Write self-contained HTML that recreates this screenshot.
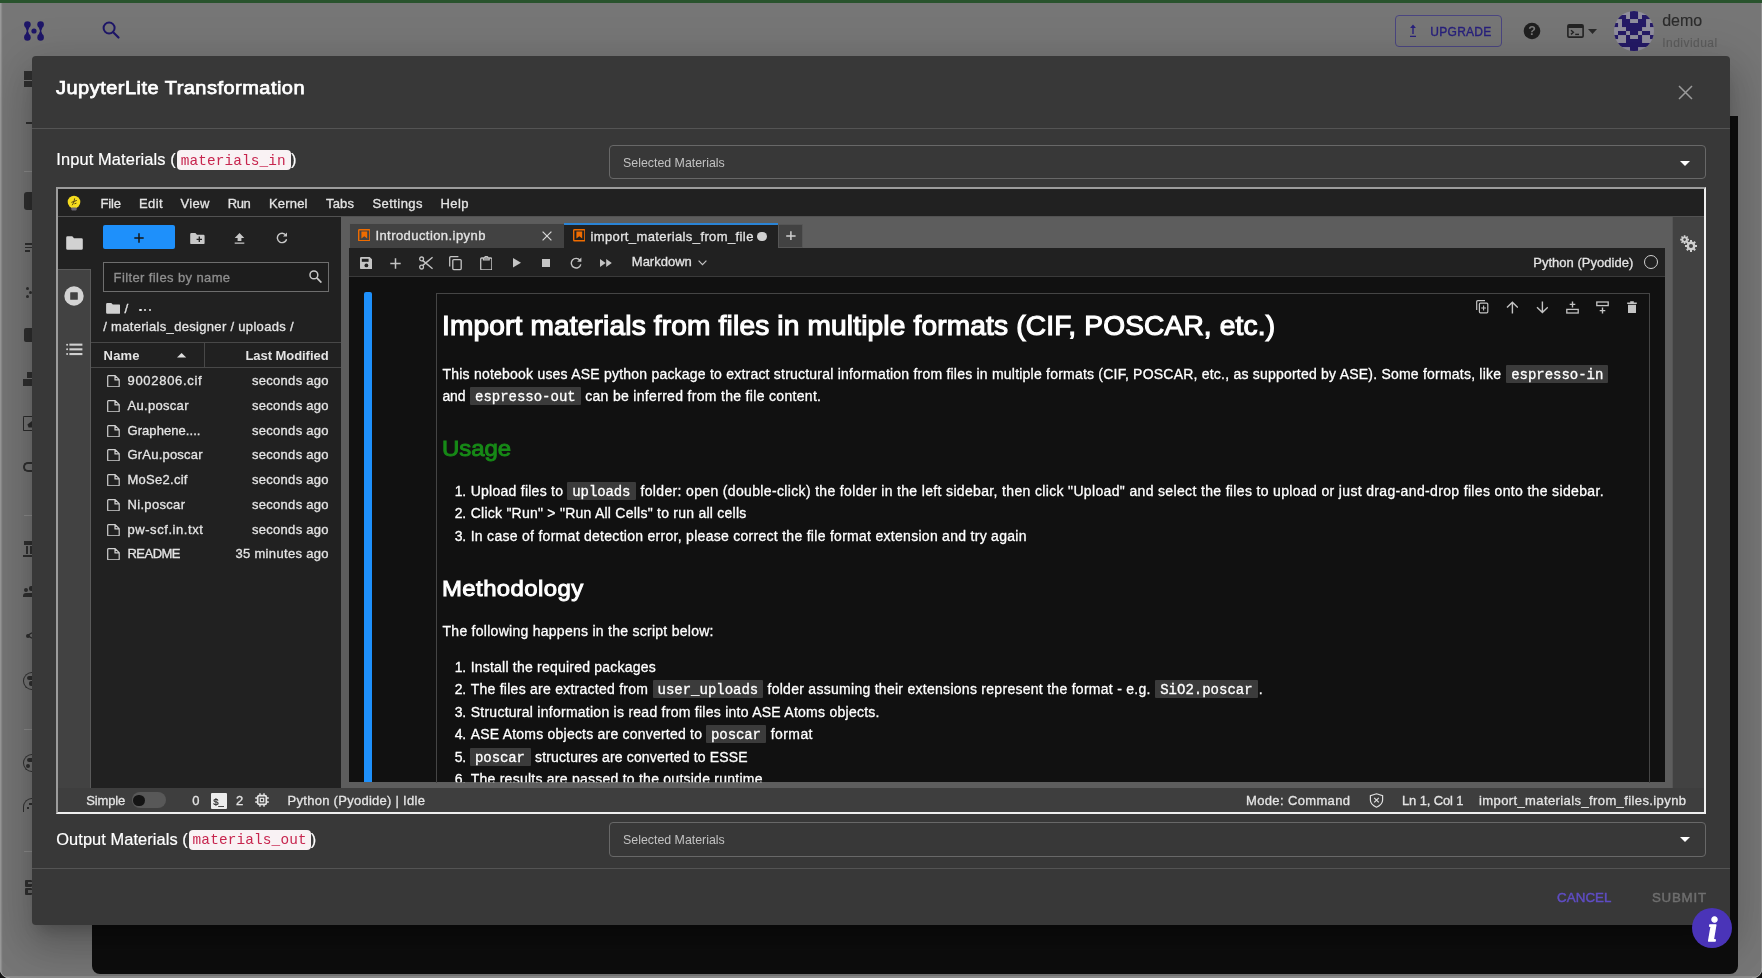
<!DOCTYPE html><html lang="en"><head><meta charset="utf-8"><title>JupyterLite Transformation</title><style>
html,body{margin:0;padding:0}
body{width:1762px;height:978px;overflow:hidden;position:relative;background:#767676;font-family:"Liberation Sans",sans-serif}
.b{position:absolute;box-sizing:border-box;display:block}
.t{position:absolute;white-space:pre;line-height:1;display:block}
#root{position:absolute;left:0;top:0;width:1762px;height:978px;overflow:hidden;will-change:transform}

</style></head><body><div id="root">
<div class="b" style="left:0px;top:0px;width:1762px;height:978px;background:#767676;"></div>
<div class="b" style="left:0px;top:0px;width:3px;height:978px;background:linear-gradient(90deg,#9c9c9c 0,#969696 1px,#7c7c7c 2px,#767676 3px);"></div>
<div class="b" style="left:1760.6px;top:0px;width:1.4px;height:978px;background:#909090;"></div>
<div class="b" style="left:0px;top:0px;width:1762px;height:2.5px;background:#29532d;"></div>
<div class="b" style="left:92px;top:116px;width:1646px;height:858px;background:#0e0e0e;border-radius:0 0 8px 8px;"></div>
<div class="b" style="left:0px;top:975.6px;width:1762px;height:2.4px;background:#8a8a8a;"></div>
<div class="b" style="left:0px;top:968px;width:10px;height:10px;background:radial-gradient(circle at 100% 0,rgba(0,0,0,0) 9.3px,#9a9a9a 9.6px,#9a9a9a 10.3px,#151515 10.8px);"></div>
<div class="b" style="left:1752px;top:968px;width:10px;height:10px;background:radial-gradient(circle at 0 0,rgba(0,0,0,0) 9.3px,#9a9a9a 9.6px,#9a9a9a 10.3px,#151515 10.8px);"></div>
<svg class="b" style="left:24px;top:21px;" width="20" height="20" viewBox="0 0 20 20"><g fill="#1e1668"><circle cx="3.4" cy="3.6" r="3.3"/><circle cx="16.6" cy="3.6" r="3.3"/><circle cx="3.4" cy="16.4" r="3.3"/><circle cx="16.6" cy="16.4" r="3.3"/><circle cx="10" cy="10" r="2.6"/><path d="M1.2 5.5 L5.6 5.5 L4 10 L5.6 14.5 L1.2 14.5 L2.8 10 Z"/><path d="M14.4 5.5 L18.8 5.5 L17.2 10 L18.8 14.5 L14.4 14.5 L16 10 Z"/></g></svg>
<svg class="b" style="left:101.4px;top:20.3px;" width="20" height="20" viewBox="0 0 20 20"><circle cx="8.1" cy="8" r="5.5" fill="none" stroke="#1e1668" stroke-width="2"/><path d="M12.2 12.2 L17.5 17.5" stroke="#1e1668" stroke-width="2.2" stroke-linecap="round"/></svg>
<div class="b" style="left:24.3px;top:71.4px;width:7.7px;height:8.4px;background:#303030;"></div>
<div class="b" style="left:24.3px;top:81.4px;width:7.7px;height:5.2px;background:#303030;"></div>
<div class="b" style="left:26px;top:122px;width:6px;height:1.6px;background:#303030;"></div>
<div class="b" style="left:24px;top:171px;width:8px;height:1px;background:#8c8c8c;"></div>
<div class="b" style="left:24px;top:192px;width:8px;height:18px;background:#303030;border-radius:3px 0 0 3px;"></div>
<div class="b" style="left:25px;top:243px;width:7px;height:1.6px;background:#303030;"></div>
<div class="b" style="left:25px;top:246.5px;width:7px;height:1.6px;background:#303030;"></div>
<div class="b" style="left:25px;top:250px;width:5px;height:1.6px;background:#303030;"></div>
<div class="b" style="left:26px;top:287px;width:3px;height:3px;background:#303030;border-radius:2px;"></div>
<div class="b" style="left:29px;top:291px;width:3px;height:3px;background:#303030;border-radius:2px;"></div>
<div class="b" style="left:26px;top:295px;width:3px;height:3px;background:#303030;border-radius:2px;"></div>
<div class="b" style="left:24px;top:328px;width:8px;height:14px;background:#303030;border-radius:2px 0 0 2px;"></div>
<div class="b" style="left:27px;top:372px;width:5px;height:6px;background:#303030;"></div>
<div class="b" style="left:23px;top:379px;width:9px;height:7px;background:#303030;"></div>
<div class="b" style="left:23.2px;top:416.4px;width:8.8px;height:14.6px;border:1.7px solid #2c2c2c;border-right:none;border-radius:1.5px 0 0 1.5px;"></div>
<svg class="b" style="left:27px;top:421px;" width="5" height="6.5" viewBox="0 0 5 6.5"><path d="M5 0 L0.4 3.6 L1.6 6.5 H5 Z" fill="#2c2c2c"/></svg>
<div class="b" style="left:23px;top:462px;width:9px;height:10px;border:2px solid #303030;border-right:none;border-radius:6px 0 0 6px;"></div>
<div class="b" style="left:24px;top:515px;width:8px;height:1px;background:#8c8c8c;"></div>
<div class="b" style="left:24px;top:541px;width:8px;height:4px;background:#303030;"></div>
<div class="b" style="left:26px;top:546px;width:2px;height:8px;background:#303030;"></div>
<div class="b" style="left:30px;top:546px;width:2px;height:8px;background:#303030;"></div>
<div class="b" style="left:23px;top:555px;width:9px;height:2px;background:#303030;"></div>
<div class="b" style="left:24px;top:588px;width:4px;height:4px;background:#303030;border-radius:2px;"></div>
<div class="b" style="left:23px;top:593px;width:9px;height:4px;background:#303030;border-radius:3px 0 0 0;"></div>
<div class="b" style="left:29px;top:586px;width:3px;height:5px;background:#303030;border-radius:2px 0 0 2px;"></div>
<div class="b" style="left:25.5px;top:633.5px;width:4px;height:4px;background:#303030;border-radius:2px;"></div>
<svg class="b" style="left:27px;top:628px;" width="5" height="14" viewBox="0 0 5 14"><path d="M0.5 7.5 L5 4.8 M0.5 7.5 L5 10.2" stroke="#303030" stroke-width="1.4"/></svg>
<div class="b" style="left:23px;top:672px;width:9px;height:18px;border:1.8px solid #303030;border-right:none;border-radius:9px 0 0 9px;"></div>
<div class="b" style="left:26.5px;top:676px;width:5.5px;height:4px;background:#303030;border-radius:2px 0 0 2px;"></div>
<div class="b" style="left:28.5px;top:681px;width:3.5px;height:5px;background:#303030;border-radius:2px 0 0 2px;"></div>
<div class="b" style="left:24px;top:729px;width:8px;height:1px;background:#8c8c8c;"></div>
<div class="b" style="left:23px;top:753.5px;width:9px;height:18px;border:1.8px solid #303030;border-right:none;border-radius:9px 0 0 9px;"></div>
<div class="b" style="left:27px;top:758px;width:5px;height:3.5px;background:#303030;border-radius:2px 0 0 2px;"></div>
<div class="b" style="left:26px;top:764px;width:4px;height:4px;background:#303030;border-radius:2px;"></div>
<div class="b" style="left:23px;top:798px;width:9px;height:14px;border:1.8px solid #303030;border-right:none;border-bottom:none;border-radius:9px 0 0 0;"></div>
<div class="b" style="left:28.5px;top:803px;width:3.5px;height:2px;background:#303030;"></div>
<div class="b" style="left:27px;top:807px;width:2px;height:2px;background:#303030;"></div>
<div class="b" style="left:24px;top:851px;width:8px;height:1px;background:#8c8c8c;"></div>
<div class="b" style="left:24.5px;top:879.5px;width:7.5px;height:7px;background:#303030;border-radius:1px;"></div>
<div class="b" style="left:24.5px;top:888px;width:7.5px;height:7px;background:#303030;border-radius:1px;"></div>
<div class="b" style="left:27.5px;top:881.8px;width:4.5px;height:2.4px;background:#6a6a6a;"></div>
<div class="b" style="left:27.5px;top:890.3px;width:4.5px;height:2.4px;background:#6a6a6a;"></div>
<div class="b" style="left:1395px;top:15px;width:107px;height:32px;border:1px solid #4a4580;border-radius:4px;"></div>
<svg class="b" style="left:1409px;top:24px;" width="8" height="14" viewBox="0 0 8 14"><path d="M4 0.6 L1.1 4 L3.3 4 L3.3 10 L4.7 10 L4.7 4 L6.9 4 Z M1 11.7 H7 V13 H1 Z" fill="#28207c"/></svg>
<span class="t" style="top:26.00px;font-size:12px;color:#28207c;left:1430.30px;letter-spacing:0.276px;-webkit-text-stroke:0.35px;">UPGRADE</span>
<svg class="b" style="left:1523px;top:22px;" width="18" height="18" viewBox="0 0 18 18"><circle cx="9" cy="9" r="8.3" fill="#1f1f1f"/><text x="9" y="13.3" font-size="12.5" font-weight="700" text-anchor="middle" fill="#7a7a7a" font-family="Liberation Sans, sans-serif">?</text></svg>
<svg class="b" style="left:1567px;top:24px;" width="17" height="14" viewBox="0 0 17 14"><rect x="0.9" y="0.9" width="15.2" height="12.2" rx="1.2" fill="none" stroke="#232323" stroke-width="1.6"/><rect x="1" y="1" width="15" height="3" fill="#232323"/><path d="M4 6.2 L6.4 8.3 L4 10.4" fill="none" stroke="#232323" stroke-width="1.4"/><path d="M8.2 10.4 H12" stroke="#232323" stroke-width="1.4"/></svg>
<svg class="b" style="left:1587.5px;top:28.6px;" width="9" height="5" viewBox="0 0 9 5"><path d="M0 0 H9 L4.5 5 Z" fill="#2a2a2a"/></svg>
<svg class="b" style="left:1614px;top:11px;" width="40" height="40" viewBox="0 0 40 40"><defs><clipPath id="avc"><circle cx="20" cy="20" r="20"/></clipPath></defs><circle cx="20" cy="20" r="20" fill="#908e9d"/><g clip-path="url(#avc)" fill="#251a66"><rect x="16.0" y="0.0" width="4.05" height="4.05"/><rect x="20.0" y="0.0" width="4.05" height="4.05"/><rect x="4.0" y="4.0" width="4.05" height="4.05"/><rect x="8.0" y="4.0" width="4.05" height="4.05"/><rect x="16.0" y="4.0" width="4.05" height="4.05"/><rect x="20.0" y="4.0" width="4.05" height="4.05"/><rect x="28.0" y="4.0" width="4.05" height="4.05"/><rect x="32.0" y="4.0" width="4.05" height="4.05"/><rect x="8.0" y="8.0" width="4.05" height="4.05"/><rect x="12.0" y="8.0" width="4.05" height="4.05"/><rect x="24.0" y="8.0" width="4.05" height="4.05"/><rect x="28.0" y="8.0" width="4.05" height="4.05"/><rect x="0.0" y="12.0" width="4.05" height="4.05"/><rect x="8.0" y="12.0" width="4.05" height="4.05"/><rect x="12.0" y="12.0" width="4.05" height="4.05"/><rect x="16.0" y="12.0" width="4.05" height="4.05"/><rect x="20.0" y="12.0" width="4.05" height="4.05"/><rect x="24.0" y="12.0" width="4.05" height="4.05"/><rect x="28.0" y="12.0" width="4.05" height="4.05"/><rect x="36.0" y="12.0" width="4.05" height="4.05"/><rect x="12.0" y="16.0" width="4.05" height="4.05"/><rect x="16.0" y="16.0" width="4.05" height="4.05"/><rect x="20.0" y="16.0" width="4.05" height="4.05"/><rect x="24.0" y="16.0" width="4.05" height="4.05"/><rect x="4.0" y="20.0" width="4.05" height="4.05"/><rect x="8.0" y="20.0" width="4.05" height="4.05"/><rect x="16.0" y="20.0" width="4.05" height="4.05"/><rect x="20.0" y="20.0" width="4.05" height="4.05"/><rect x="28.0" y="20.0" width="4.05" height="4.05"/><rect x="32.0" y="20.0" width="4.05" height="4.05"/><rect x="0.0" y="24.0" width="4.05" height="4.05"/><rect x="12.0" y="24.0" width="4.05" height="4.05"/><rect x="24.0" y="24.0" width="4.05" height="4.05"/><rect x="36.0" y="24.0" width="4.05" height="4.05"/><rect x="12.0" y="28.0" width="4.05" height="4.05"/><rect x="16.0" y="28.0" width="4.05" height="4.05"/><rect x="20.0" y="28.0" width="4.05" height="4.05"/><rect x="24.0" y="28.0" width="4.05" height="4.05"/><rect x="4.0" y="32.0" width="4.05" height="4.05"/><rect x="8.0" y="32.0" width="4.05" height="4.05"/><rect x="12.0" y="32.0" width="4.05" height="4.05"/><rect x="16.0" y="32.0" width="4.05" height="4.05"/><rect x="20.0" y="32.0" width="4.05" height="4.05"/><rect x="24.0" y="32.0" width="4.05" height="4.05"/><rect x="28.0" y="32.0" width="4.05" height="4.05"/><rect x="32.0" y="32.0" width="4.05" height="4.05"/><rect x="16.0" y="36.0" width="4.05" height="4.05"/><rect x="20.0" y="36.0" width="4.05" height="4.05"/></g></svg>
<span class="t" style="top:13.10px;font-size:16px;color:#2c2c2c;left:1662.20px;letter-spacing:-0.010px;-webkit-text-stroke:0.15px;">demo</span>
<span class="t" style="top:36.80px;font-size:12px;color:#5c5c5c;left:1662.20px;letter-spacing:0.477px;-webkit-text-stroke:0.15px;">Individual</span>
<div class="b" style="left:32px;top:56px;width:1698px;height:869px;background:#383838;border-radius:4px;box-shadow:0 11px 15px -7px rgba(0,0,0,.2),0 24px 38px 3px rgba(0,0,0,.14),0 9px 46px 8px rgba(0,0,0,.12);"></div>
<span class="t" style="top:79.05px;font-size:18.9px;color:#fff;left:56.30px;letter-spacing:0.435px;-webkit-text-stroke:0.75px;transform:scaleX(1.06);transform-origin:0 0;">JupyterLite Transformation</span>
<svg class="b" style="left:1678px;top:84.5px;" width="15" height="15" viewBox="0 0 15 15"><path d="M1 1 L14 14 M14 1 L1 14" stroke="#9a9a9a" stroke-width="1.5" fill="none"/></svg>
<div class="b" style="left:32px;top:128px;width:1698px;height:1px;background:#545454;"></div>
<div class="b" style="left:32px;top:868px;width:1698px;height:1px;background:#545454;"></div>
<span class="t" style="top:150.90px;font-size:16.4px;color:#fff;left:56.30px;letter-spacing:0.124px;-webkit-text-stroke:0.2px;">Input Materials (</span>
<div class="b" style="left:176.7px;top:150px;width:114.7px;height:19.7px;background:#f9f2f4;border-radius:4px;"></div>
<span class="t" style="top:153.60px;font-size:14.4px;color:#c7254e;font-family:'Liberation Mono', 'DejaVu Sans Mono', monospace;left:180.70px;letter-spacing:0.124px;">materials_in</span>
<span class="t" style="top:150.90px;font-size:16.4px;color:#fff;left:291.00px;-webkit-text-stroke:0.2px;">)</span>
<div class="b" style="left:609px;top:145px;width:1097px;height:33.6px;border:1px solid #686868;border-radius:4px;"></div>
<span class="t" style="top:157.00px;font-size:12.4px;color:#c2c2c2;left:623.00px;letter-spacing:-0.008px;">Selected Materials</span>
<svg class="b" style="left:1680px;top:160.5px;" width="10" height="5" viewBox="0 0 10 5"><path d="M0 0 H10 L5 5 Z" fill="#fff"/></svg>
<span class="t" style="top:830.70px;font-size:16.4px;color:#fff;left:56.30px;letter-spacing:0.073px;-webkit-text-stroke:0.2px;">Output Materials (</span>
<div class="b" style="left:188.8px;top:830.2px;width:122.3px;height:19.7px;background:#f9f2f4;border-radius:4px;"></div>
<span class="t" style="top:833.40px;font-size:14.4px;color:#c7254e;font-family:'Liberation Mono', 'DejaVu Sans Mono', monospace;left:192.60px;letter-spacing:0.145px;">materials_out</span>
<span class="t" style="top:830.70px;font-size:16.4px;color:#fff;left:310.80px;-webkit-text-stroke:0.2px;">)</span>
<div class="b" style="left:609px;top:822px;width:1097px;height:35px;border:1px solid #686868;border-radius:4px;"></div>
<span class="t" style="top:834.40px;font-size:12.4px;color:#c2c2c2;left:623.00px;letter-spacing:-0.008px;">Selected Materials</span>
<svg class="b" style="left:1680px;top:837px;" width="10" height="5" viewBox="0 0 10 5"><path d="M0 0 H10 L5 5 Z" fill="#fff"/></svg>
<span class="t" style="top:890.85px;font-size:13.3px;color:#5f4dc4;left:1557.00px;letter-spacing:0.109px;-webkit-text-stroke:0.45px;">CANCEL</span>
<span class="t" style="top:890.85px;font-size:13.3px;color:#6f6f6f;left:1652.00px;letter-spacing:0.753px;-webkit-text-stroke:0.45px;">SUBMIT</span>
<svg class="b" style="left:1692px;top:908px;" width="40" height="40" viewBox="0 0 40 40"><circle cx="20" cy="20" r="20" fill="#4a34b8"/><text x="20.6" y="32.6" font-size="34" font-weight="700" font-style="italic" text-anchor="middle" fill="#fff" stroke="#fff" stroke-width="1.3" stroke-linejoin="round" font-family="Liberation Serif, serif">i</text></svg>
<div class="b" style="left:56px;top:187px;width:1650px;height:627px;background:#5d5d5d;border:2px solid;border-color:#9c9c9c #eeeeee #eeeeee #9c9c9c;"></div>
<div class="b" style="left:58px;top:189px;width:1646px;height:27px;background:#212121;"></div>
<div class="b" style="left:58px;top:216px;width:1646px;height:1px;background:#525252;"></div>
<svg class="b" style="left:66px;top:194px;" width="16" height="18" viewBox="0 0 16 18"><circle cx="8" cy="8" r="6.3" fill="#f5dc1f"/><rect x="5.3" y="13.6" width="5.4" height="2.8" rx="0.8" fill="#6b6670"/><path d="M6.2 11.2 C7.6 9.2 8.3 7 8.6 4.4 M5.4 8.4 L10.8 6.4 M8.4 9.8 L10.4 9.2" stroke="#5a4a12" stroke-width="1" fill="none"/></svg>
<span class="t" style="top:197.10px;font-size:13px;color:#e4e4e4;left:100.50px;letter-spacing:-0.151px;-webkit-text-stroke:0.3px;">File</span>
<span class="t" style="top:197.10px;font-size:13px;color:#e4e4e4;left:139.00px;letter-spacing:0.365px;-webkit-text-stroke:0.3px;">Edit</span>
<span class="t" style="top:197.10px;font-size:13px;color:#e4e4e4;left:180.50px;letter-spacing:0.349px;-webkit-text-stroke:0.3px;">View</span>
<span class="t" style="top:197.10px;font-size:13px;color:#e4e4e4;left:227.70px;letter-spacing:-0.430px;-webkit-text-stroke:0.3px;">Run</span>
<span class="t" style="top:197.10px;font-size:13px;color:#e4e4e4;left:269.00px;letter-spacing:0.184px;-webkit-text-stroke:0.3px;">Kernel</span>
<span class="t" style="top:197.10px;font-size:13px;color:#e4e4e4;left:326.00px;letter-spacing:0.177px;-webkit-text-stroke:0.3px;">Tabs</span>
<span class="t" style="top:197.10px;font-size:13px;color:#e4e4e4;left:372.50px;letter-spacing:0.431px;-webkit-text-stroke:0.3px;">Settings</span>
<span class="t" style="top:197.10px;font-size:13px;color:#e4e4e4;left:440.50px;letter-spacing:0.417px;-webkit-text-stroke:0.3px;">Help</span>
<div class="b" style="left:58px;top:217px;width:33px;height:571px;background:#424242;"></div>
<div class="b" style="left:58px;top:217px;width:34px;height:52px;background:#212121;"></div>
<div class="b" style="left:58px;top:268.6px;width:33px;height:1px;background:#5a5a5a;"></div>
<div class="b" style="left:90px;top:268.6px;width:1px;height:519.4px;background:#5a5a5a;"></div>
<svg class="b" style="left:65.5px;top:236px;" width="17" height="14" viewBox="0 0 17 14"><path d="M1.6 0.3 H6.3 L8 2.2 H15.4 Q16.8 2.2 16.8 3.6 V12.4 Q16.8 13.8 15.4 13.8 H1.6 Q0.2 13.8 0.2 12.4 V1.7 Q0.2 0.3 1.6 0.3 Z" fill="#d2d2d2"/></svg>
<svg class="b" style="left:64px;top:286px;" width="20" height="20" viewBox="0 0 20 20"><circle cx="10" cy="10" r="9.7" fill="#d4d4d4"/><rect x="6.2" y="6.2" width="7.6" height="7.6" rx="0.6" fill="#424242"/></svg>
<svg class="b" style="left:65.5px;top:343px;" width="17" height="13" viewBox="0 0 17 13"><g fill="#d0d0d0"><rect x="3.4" y="0.6" width="13" height="2.1"/><rect x="3.4" y="5.3" width="13" height="2.1"/><rect x="3.4" y="10" width="13" height="2.1"/><circle cx="1.1" cy="1.65" r="1"/><circle cx="1.1" cy="6.35" r="1"/><circle cx="1.1" cy="11.05" r="1"/></g></svg>
<div class="b" style="left:91px;top:217px;width:250px;height:571px;background:#212121;"></div>
<div class="b" style="left:103.2px;top:225.2px;width:71.8px;height:23.8px;background:#1e90fb;border-radius:2px;"></div>
<svg class="b" style="left:134px;top:233px;" width="10" height="10" viewBox="0 0 10 10"><path d="M5 0.3 V9.7 M0.3 5 H9.7" stroke="#161616" stroke-width="1.5"/></svg>
<svg class="b" style="left:190px;top:232.6px;" width="15" height="11.4" viewBox="0 0 15 11.4"><path d="M1.4 0 H5.4 L7 1.7 H13.4 Q14.6 1.7 14.6 2.9 V10 Q14.6 11.2 13.4 11.2 H1.4 Q0.2 11.2 0.2 10 V1.2 Q0.2 0 1.4 0 Z" fill="#c8c8c8"/><path d="M9.3 3.6 V9 M6.6 6.3 H12" stroke="#212121" stroke-width="1.3"/></svg>
<svg class="b" style="left:233.5px;top:232.6px;" width="11" height="11" viewBox="0 0 11 11"><path d="M5.5 0 L10.3 5 H7.4 V8 H3.6 V5 H0.7 Z M0.7 9.4 H10.3 V10.8 H0.7 Z" fill="#c8c8c8"/></svg>
<svg class="b" style="left:275.5px;top:232.4px;" width="11.6" height="11.6" viewBox="0 0 11.6 11.6"><path d="M9.9 3.2 A4.7 4.7 0 1 0 10.6 7.2" fill="none" stroke="#c8c8c8" stroke-width="1.4"/><path d="M11.2 0.4 V4.6 H7 Z" fill="#c8c8c8"/></svg>
<div class="b" style="left:103px;top:262px;width:226.4px;height:29.6px;background:#1d1d1d;border:1px solid #6e6e6e;"></div>
<span class="t" style="top:271.20px;font-size:13px;color:#8f8f8f;left:113.60px;letter-spacing:0.390px;-webkit-text-stroke:0.3px;">Filter files by name</span>
<svg class="b" style="left:308.5px;top:269.6px;" width="13.2" height="13.4" viewBox="0 0 13.2 13.4"><circle cx="4.9" cy="4.9" r="3.9" fill="none" stroke="#c8c8c8" stroke-width="1.5"/><path d="M7.8 7.8 L12.4 12.6" stroke="#c8c8c8" stroke-width="1.7"/></svg>
<svg class="b" style="left:105.8px;top:303.4px;" width="14.6" height="11" viewBox="0 0 14.6 11"><path d="M1.3 0 H5.3 L6.8 1.6 H13.2 Q14.4 1.6 14.4 2.8 V9.6 Q14.4 10.8 13.2 10.8 H1.3 Q0.1 10.8 0.1 9.6 V1.2 Q0.1 0 1.3 0 Z" fill="#d0d0d0"/></svg>
<span class="t" style="top:302.25px;font-size:13.5px;color:#e4e4e4;left:124.60px;-webkit-text-stroke:0.3px;">/</span>
<div class="b" style="left:139.2px;top:308.6px;width:2.6px;height:2.6px;background:#e8e8e8;border-radius:2px;"></div>
<div class="b" style="left:143.9px;top:308.6px;width:2.6px;height:2.6px;background:#e8e8e8;border-radius:2px;"></div>
<div class="b" style="left:148.6px;top:308.6px;width:2.6px;height:2.6px;background:#e8e8e8;border-radius:2px;"></div>
<span class="t" style="top:320.10px;font-size:13px;color:#e4e4e4;left:103.20px;letter-spacing:0.314px;-webkit-text-stroke:0.3px;">/ materials_designer / uploads /</span>
<div class="b" style="left:91px;top:342px;width:250px;height:1px;background:#484848;"></div>
<div class="b" style="left:91px;top:367px;width:250px;height:1px;background:#484848;"></div>
<div class="b" style="left:204px;top:342px;width:1px;height:26px;background:#484848;"></div>
<span class="t" style="top:349.10px;font-size:13px;color:#e4e4e4;font-weight:700;left:103.60px;letter-spacing:0.193px;">Name</span>
<svg class="b" style="left:177.4px;top:353px;" width="9.2" height="4.6" viewBox="0 0 9.2 4.6"><path d="M0 4.6 L4.6 0 L9.2 4.6 Z" fill="#e0e0e0"/></svg>
<span class="t" style="top:349.10px;font-size:13px;color:#e4e4e4;font-weight:700;left:245.40px;letter-spacing:-0.048px;">Last Modified</span>
<svg class="b" style="left:106.6px;top:374.8px;" width="13" height="12.6" viewBox="0 0 13 12.6"><path d="M1.4 0.7 H8.2 L12.2 4.6 V11 Q12.2 11.9 11.3 11.9 H1.4 Q0.7 11.9 0.7 11 V1.5 Q0.7 0.7 1.4 0.7 Z M8 0.9 V4.9 H12" fill="none" stroke="#d0d0d0" stroke-width="1.2" stroke-linejoin="round"/></svg>
<span class="t" style="top:374.00px;font-size:13px;color:#e4e4e4;left:127.50px;letter-spacing:0.697px;-webkit-text-stroke:0.3px;">9002806.cif</span>
<span class="t" style="top:374.00px;font-size:13px;color:#e4e4e4;left:252.00px;letter-spacing:0.287px;-webkit-text-stroke:0.3px;">seconds ago</span>
<svg class="b" style="left:106.6px;top:399.8px;" width="13" height="12.6" viewBox="0 0 13 12.6"><path d="M1.4 0.7 H8.2 L12.2 4.6 V11 Q12.2 11.9 11.3 11.9 H1.4 Q0.7 11.9 0.7 11 V1.5 Q0.7 0.7 1.4 0.7 Z M8 0.9 V4.9 H12" fill="none" stroke="#d0d0d0" stroke-width="1.2" stroke-linejoin="round"/></svg>
<span class="t" style="top:399.00px;font-size:13px;color:#e4e4e4;left:127.50px;letter-spacing:0.307px;-webkit-text-stroke:0.3px;">Au.poscar</span>
<span class="t" style="top:399.00px;font-size:13px;color:#e4e4e4;left:252.00px;letter-spacing:0.287px;-webkit-text-stroke:0.3px;">seconds ago</span>
<svg class="b" style="left:106.6px;top:424.8px;" width="13" height="12.6" viewBox="0 0 13 12.6"><path d="M1.4 0.7 H8.2 L12.2 4.6 V11 Q12.2 11.9 11.3 11.9 H1.4 Q0.7 11.9 0.7 11 V1.5 Q0.7 0.7 1.4 0.7 Z M8 0.9 V4.9 H12" fill="none" stroke="#d0d0d0" stroke-width="1.2" stroke-linejoin="round"/></svg>
<span class="t" style="top:424.00px;font-size:13px;color:#e4e4e4;left:127.50px;letter-spacing:0.065px;-webkit-text-stroke:0.3px;">Graphene....</span>
<span class="t" style="top:424.00px;font-size:13px;color:#e4e4e4;left:252.00px;letter-spacing:0.287px;-webkit-text-stroke:0.3px;">seconds ago</span>
<svg class="b" style="left:106.6px;top:448.8px;" width="13" height="12.6" viewBox="0 0 13 12.6"><path d="M1.4 0.7 H8.2 L12.2 4.6 V11 Q12.2 11.9 11.3 11.9 H1.4 Q0.7 11.9 0.7 11 V1.5 Q0.7 0.7 1.4 0.7 Z M8 0.9 V4.9 H12" fill="none" stroke="#d0d0d0" stroke-width="1.2" stroke-linejoin="round"/></svg>
<span class="t" style="top:448.00px;font-size:13px;color:#e4e4e4;left:127.50px;letter-spacing:0.202px;-webkit-text-stroke:0.3px;">GrAu.poscar</span>
<span class="t" style="top:448.00px;font-size:13px;color:#e4e4e4;left:252.00px;letter-spacing:0.287px;-webkit-text-stroke:0.3px;">seconds ago</span>
<svg class="b" style="left:106.6px;top:473.8px;" width="13" height="12.6" viewBox="0 0 13 12.6"><path d="M1.4 0.7 H8.2 L12.2 4.6 V11 Q12.2 11.9 11.3 11.9 H1.4 Q0.7 11.9 0.7 11 V1.5 Q0.7 0.7 1.4 0.7 Z M8 0.9 V4.9 H12" fill="none" stroke="#d0d0d0" stroke-width="1.2" stroke-linejoin="round"/></svg>
<span class="t" style="top:473.00px;font-size:13px;color:#e4e4e4;left:127.50px;letter-spacing:0.273px;-webkit-text-stroke:0.3px;">MoSe2.cif</span>
<span class="t" style="top:473.00px;font-size:13px;color:#e4e4e4;left:252.00px;letter-spacing:0.287px;-webkit-text-stroke:0.3px;">seconds ago</span>
<svg class="b" style="left:106.6px;top:498.8px;" width="13" height="12.6" viewBox="0 0 13 12.6"><path d="M1.4 0.7 H8.2 L12.2 4.6 V11 Q12.2 11.9 11.3 11.9 H1.4 Q0.7 11.9 0.7 11 V1.5 Q0.7 0.7 1.4 0.7 Z M8 0.9 V4.9 H12" fill="none" stroke="#d0d0d0" stroke-width="1.2" stroke-linejoin="round"/></svg>
<span class="t" style="top:498.00px;font-size:13px;color:#e4e4e4;left:127.50px;letter-spacing:0.322px;-webkit-text-stroke:0.3px;">Ni.poscar</span>
<span class="t" style="top:498.00px;font-size:13px;color:#e4e4e4;left:252.00px;letter-spacing:0.287px;-webkit-text-stroke:0.3px;">seconds ago</span>
<svg class="b" style="left:106.6px;top:523.8px;" width="13" height="12.6" viewBox="0 0 13 12.6"><path d="M1.4 0.7 H8.2 L12.2 4.6 V11 Q12.2 11.9 11.3 11.9 H1.4 Q0.7 11.9 0.7 11 V1.5 Q0.7 0.7 1.4 0.7 Z M8 0.9 V4.9 H12" fill="none" stroke="#d0d0d0" stroke-width="1.2" stroke-linejoin="round"/></svg>
<span class="t" style="top:523.00px;font-size:13px;color:#e4e4e4;left:127.50px;letter-spacing:0.556px;-webkit-text-stroke:0.3px;">pw-scf.in.txt</span>
<span class="t" style="top:523.00px;font-size:13px;color:#e4e4e4;left:252.00px;letter-spacing:0.287px;-webkit-text-stroke:0.3px;">seconds ago</span>
<svg class="b" style="left:106.6px;top:547.8px;" width="13" height="12.6" viewBox="0 0 13 12.6"><path d="M1.4 0.7 H8.2 L12.2 4.6 V11 Q12.2 11.9 11.3 11.9 H1.4 Q0.7 11.9 0.7 11 V1.5 Q0.7 0.7 1.4 0.7 Z M8 0.9 V4.9 H12" fill="none" stroke="#d0d0d0" stroke-width="1.2" stroke-linejoin="round"/></svg>
<span class="t" style="top:547.00px;font-size:13px;color:#e4e4e4;left:127.50px;letter-spacing:-0.525px;-webkit-text-stroke:0.3px;">README</span>
<span class="t" style="top:547.00px;font-size:13px;color:#e4e4e4;left:235.40px;letter-spacing:0.330px;-webkit-text-stroke:0.3px;">35 minutes ago</span>
<div class="b" style="left:349px;top:223.3px;width:215.5px;height:24.7px;background:#424242;border:1px solid #5c5c5c;border-bottom:none;"></div>
<div class="b" style="left:564px;top:222.5px;width:214.3px;height:25.8px;background:#212121;"></div>
<div class="b" style="left:564px;top:222.5px;width:214.3px;height:2.6px;background:#2a84d6;"></div>
<div class="b" style="left:778.3px;top:223.5px;width:24.5px;height:24.2px;background:#424242;border:1px solid #565656;"></div>
<svg class="b" style="left:786.2px;top:230.6px;" width="9.8" height="9.8" viewBox="0 0 9.8 9.8"><path d="M4.9 0.2 V9.6 M0.2 4.9 H9.6" stroke="#d0d0d0" stroke-width="1.5"/></svg>
<svg class="b" style="left:357.8px;top:228.9px;" width="12.6" height="12.4" viewBox="0 0 12.6 12.4"><rect x="0.7" y="0.7" width="11.2" height="11" rx="0.8" fill="none" stroke="#ef6c00" stroke-width="1.4"/><path d="M3.4 2.4 H9.2 V9.4 L6.3 7.2 L3.4 9.4 Z" fill="#ef6c00"/></svg>
<span class="t" style="top:228.90px;font-size:13px;color:#e4e4e4;left:375.40px;letter-spacing:0.434px;-webkit-text-stroke:0.3px;">Introduction.ipynb</span>
<svg class="b" style="left:542px;top:230.6px;" width="10" height="10" viewBox="0 0 10 10"><path d="M0.6 0.6 L9.4 9.4 M9.4 0.6 L0.6 9.4" stroke="#d8d8d8" stroke-width="1.2"/></svg>
<svg class="b" style="left:572.9px;top:229.4px;" width="12.6" height="12.4" viewBox="0 0 12.6 12.4"><rect x="0.7" y="0.7" width="11.2" height="11" rx="0.8" fill="none" stroke="#ef6c00" stroke-width="1.4"/><path d="M3.4 2.4 H9.2 V9.4 L6.3 7.2 L3.4 9.4 Z" fill="#ef6c00"/></svg>
<span class="t" style="top:229.80px;font-size:13px;color:#e4e4e4;left:590.40px;letter-spacing:0.393px;-webkit-text-stroke:0.3px;">import_materials_from_file</span>
<div class="b" style="left:757.4px;top:231.7px;width:9.6px;height:9.6px;background:#d0d0d0;border-radius:5px;"></div>
<div class="b" style="left:349px;top:248px;width:1316px;height:28.4px;background:#212121;"></div>
<div class="b" style="left:349px;top:276.4px;width:1316px;height:1px;background:#3a3a3a;"></div>
<svg class="b" style="left:359.6px;top:257.2px;" width="12.8" height="12.2" viewBox="0 0 12.8 12.2"><path d="M1.2 0 H9.6 L12.8 3 V11 Q12.8 12.2 11.6 12.2 H1.2 Q0 12.2 0 11 V1.2 Q0 0 1.2 0 Z" fill="#c4c4c4"/><rect x="1.8" y="1.8" width="6.8" height="3" fill="#212121"/><circle cx="6.4" cy="8.4" r="1.9" fill="#212121"/></svg>
<svg class="b" style="left:390.4px;top:257.7px;" width="11" height="11" viewBox="0 0 11 11"><path d="M5.5 0.3 V10.7 M0.3 5.5 H10.7" stroke="#c4c4c4" stroke-width="1.5"/></svg>
<svg class="b" style="left:419.2px;top:256.4px;" width="14" height="14" viewBox="0 0 14 14"><path d="M13.6 1.2 L3.6 9.6 M13.6 12.8 L3.6 4.4" stroke="#c4c4c4" stroke-width="1.5" fill="none"/><circle cx="2.6" cy="2.9" r="1.9" fill="none" stroke="#c4c4c4" stroke-width="1.3"/><circle cx="2.6" cy="11.1" r="1.9" fill="none" stroke="#c4c4c4" stroke-width="1.3"/></svg>
<svg class="b" style="left:449px;top:256.2px;" width="13" height="14.4" viewBox="0 0 13 14.4"><path d="M9.4 0.7 H1.8 Q0.7 0.7 0.7 1.8 V10.4" fill="none" stroke="#c4c4c4" stroke-width="1.3"/><rect x="3.8" y="3.6" width="8.4" height="10" rx="1" fill="none" stroke="#c4c4c4" stroke-width="1.3"/></svg>
<svg class="b" style="left:479.8px;top:255.6px;" width="12.6" height="14.6" viewBox="0 0 12.6 14.6"><rect x="0.7" y="2" width="11.2" height="11.8" rx="1" fill="none" stroke="#c4c4c4" stroke-width="1.3"/><path d="M3.4 2 V3.8 H9.2 V2 M4.6 2 Q4.6 0.4 6.3 0.4 Q8 0.4 8 2" fill="none" stroke="#c4c4c4" stroke-width="1.2"/></svg>
<svg class="b" style="left:512.6px;top:258.4px;" width="8" height="9.6" viewBox="0 0 8 9.6"><path d="M0 0 L8 4.8 L0 9.6 Z" fill="#c4c4c4"/></svg>
<div class="b" style="left:542px;top:259.2px;width:8.2px;height:8.2px;background:#c4c4c4;"></div>
<svg class="b" style="left:570px;top:257.2px;" width="11.8" height="11.8" viewBox="0 0 11.8 11.8"><path d="M10 3.3 A4.8 4.8 0 1 0 10.8 7.3" fill="none" stroke="#c4c4c4" stroke-width="1.4"/><path d="M11.4 0.4 V4.7 H7.1 Z" fill="#c4c4c4"/></svg>
<svg class="b" style="left:600.4px;top:259.2px;" width="12" height="8" viewBox="0 0 12 8"><path d="M0 0 L5.6 4 L0 8 Z M6.2 0 L11.8 4 L6.2 8 Z" fill="#c4c4c4"/></svg>
<span class="t" style="top:255.00px;font-size:13px;color:#e4e4e4;left:631.80px;letter-spacing:0.004px;-webkit-text-stroke:0.3px;">Markdown</span>
<svg class="b" style="left:698.2px;top:260.4px;" width="9" height="5.4" viewBox="0 0 9 5.4"><path d="M0.6 0.6 L4.5 4.6 L8.4 0.6" fill="none" stroke="#c4c4c4" stroke-width="1.2"/></svg>
<span class="t" style="top:255.60px;font-size:13px;color:#e4e4e4;left:1533.20px;letter-spacing:0.031px;-webkit-text-stroke:0.3px;">Python (Pyodide)</span>
<div class="b" style="left:1644.3px;top:255.4px;width:13.4px;height:13.4px;border:1.3px solid #d0d0d0;border-radius:7px;"></div>
<div class="b" style="left:349px;top:277.4px;width:1316px;height:504.8px;background:#111111;"></div>
<div class="b" style="left:363.8px;top:292.1px;width:8.6px;height:490.1px;background:#1e90fb;border-radius:2px 2px 0 0;"></div>
<div class="b" style="left:436.2px;top:292.5px;width:1214px;height:490px;border:1px solid #454545;border-bottom:none;"></div>
<svg class="b" style="left:1476px;top:300.4px;" width="12.6" height="13.6" viewBox="0 0 12.6 13.6"><path d="M9 0.7 H1.8 Q0.7 0.7 0.7 1.8 V10" fill="none" stroke="#c4c4c4" stroke-width="1.2"/><rect x="3.4" y="3.2" width="8.4" height="9.6" rx="1" fill="none" stroke="#c4c4c4" stroke-width="1.2"/><path d="M7.6 5.6 V10.4 M5.2 8 H10" stroke="#c4c4c4" stroke-width="1.1"/></svg>
<svg class="b" style="left:1505.6px;top:300.8px;" width="12.8" height="12.8" viewBox="0 0 12.8 12.8"><path d="M6.4 12.4 V1.4 M1 6.6 L6.4 1.2 L11.8 6.6" fill="none" stroke="#c4c4c4" stroke-width="1.4"/></svg>
<svg class="b" style="left:1535.6px;top:300.8px;" width="12.8" height="12.8" viewBox="0 0 12.8 12.8"><path d="M6.4 0.4 V11.4 M1 6.2 L6.4 11.6 L11.8 6.2" fill="none" stroke="#c4c4c4" stroke-width="1.4"/></svg>
<svg class="b" style="left:1565.6px;top:300.6px;" width="13" height="13" viewBox="0 0 13 13"><path d="M6.5 0.4 V6.4 M3.7 3.4 H9.3" stroke="#c4c4c4" stroke-width="1.4"/><rect x="0.8" y="8.4" width="11.4" height="3.6" fill="none" stroke="#c4c4c4" stroke-width="1.3"/></svg>
<svg class="b" style="left:1595.6px;top:300.6px;" width="13" height="13" viewBox="0 0 13 13"><path d="M6.5 6.6 V12.6 M3.7 9.6 H9.3" stroke="#c4c4c4" stroke-width="1.4"/><rect x="0.8" y="1" width="11.4" height="3.6" fill="none" stroke="#c4c4c4" stroke-width="1.3"/></svg>
<svg class="b" style="left:1627px;top:300.6px;" width="10" height="12.6" viewBox="0 0 10 12.6"><path d="M0.2 1.6 H9.8 V3 H0.2 Z M3.2 0.2 H6.8 V1.6 H3.2 Z M1 3.8 H9 V11.4 Q9 12.4 8 12.4 H2 Q1 12.4 1 11.4 Z" fill="#c4c4c4"/></svg>
<span class="t" style="top:312.50px;font-size:27px;color:#ffffff;left:442.40px;letter-spacing:0.156px;-webkit-text-stroke:1.15px;transform:scaleX(1.04);transform-origin:0 0;">Import materials from files in multiple formats (CIF, POSCAR, etc.)</span>
<span class="t" style="top:367.00px;font-size:14px;color:#ffffff;left:442.50px;letter-spacing:0.218px;-webkit-text-stroke:0.3px;">This notebook uses ASE python package to extract structural information from files in multiple formats (CIF, POSCAR, etc., as supported by ASE). Some formats, like</span>
<div class="b" style="left:1506px;top:365px;width:102.40000000000009px;height:18px;background:#3b3b3b;border-radius:1px;"></div>
<span class="t" style="top:368.00px;font-size:14px;color:#ffffff;font-family:'Liberation Mono', 'DejaVu Sans Mono', monospace;left:1511.20px;letter-spacing:-0.022px;-webkit-text-stroke:0.3px;">espresso-in</span>
<span class="t" style="top:389.00px;font-size:14px;color:#ffffff;left:442.50px;letter-spacing:-0.180px;-webkit-text-stroke:0.3px;">and</span>
<div class="b" style="left:470px;top:387px;width:111.20000000000005px;height:18px;background:#3b3b3b;border-radius:1px;"></div>
<span class="t" style="top:390.00px;font-size:14px;color:#ffffff;font-family:'Liberation Mono', 'DejaVu Sans Mono', monospace;left:475.00px;letter-spacing:-0.012px;-webkit-text-stroke:0.3px;">espresso-out</span>
<span class="t" style="top:389.00px;font-size:14px;color:#ffffff;left:585.20px;letter-spacing:0.316px;-webkit-text-stroke:0.3px;">can be inferred from the file content.</span>
<span class="t" style="top:438.30px;font-size:22.4px;color:#178a17;left:442.20px;letter-spacing:-0.062px;-webkit-text-stroke:0.95px;transform:scaleX(1.07);transform-origin:0 0;">Usage</span>
<span class="t" style="top:484.00px;font-size:14px;color:#ffffff;left:454.80px;letter-spacing:-0.287px;-webkit-text-stroke:0.3px;">1.</span>
<span class="t" style="top:506.00px;font-size:14px;color:#ffffff;left:454.80px;letter-spacing:-0.287px;-webkit-text-stroke:0.3px;">2.</span>
<span class="t" style="top:529.00px;font-size:14px;color:#ffffff;left:454.80px;letter-spacing:-0.287px;-webkit-text-stroke:0.3px;">3.</span>
<span class="t" style="top:484.00px;font-size:14px;color:#ffffff;left:470.70px;letter-spacing:0.256px;-webkit-text-stroke:0.3px;">Upload files to</span>
<div class="b" style="left:566.8px;top:482px;width:69.20000000000005px;height:18px;background:#3b3b3b;border-radius:1px;"></div>
<span class="t" style="top:485.00px;font-size:14px;color:#ffffff;font-family:'Liberation Mono', 'DejaVu Sans Mono', monospace;left:572.30px;letter-spacing:-0.102px;-webkit-text-stroke:0.3px;">uploads</span>
<span class="t" style="top:484.00px;font-size:14px;color:#ffffff;left:640.50px;letter-spacing:0.345px;-webkit-text-stroke:0.3px;">folder: open (double-click) the folder in the left sidebar, then click "Upload" and select the files to upload or just drag-and-drop files onto the sidebar.</span>
<span class="t" style="top:506.00px;font-size:14px;color:#ffffff;left:470.70px;letter-spacing:0.245px;-webkit-text-stroke:0.3px;">Click "Run" &gt; "Run All Cells" to run all cells</span>
<span class="t" style="top:529.00px;font-size:14px;color:#ffffff;left:470.70px;letter-spacing:0.285px;-webkit-text-stroke:0.3px;">In case of format detection error, please correct the file format extension and try again</span>
<span class="t" style="top:578.30px;font-size:22.4px;color:#ffffff;left:442.40px;letter-spacing:0.374px;-webkit-text-stroke:0.95px;transform:scaleX(1.07);transform-origin:0 0;">Methodology</span>
<span class="t" style="top:624.00px;font-size:14px;color:#ffffff;left:442.50px;letter-spacing:0.270px;-webkit-text-stroke:0.3px;">The following happens in the script below:</span>
<span class="t" style="top:660.00px;font-size:14px;color:#ffffff;left:454.80px;letter-spacing:-0.287px;-webkit-text-stroke:0.3px;">1.</span>
<span class="t" style="top:682.00px;font-size:14px;color:#ffffff;left:454.80px;letter-spacing:-0.287px;-webkit-text-stroke:0.3px;">2.</span>
<span class="t" style="top:705.00px;font-size:14px;color:#ffffff;left:454.80px;letter-spacing:-0.287px;-webkit-text-stroke:0.3px;">3.</span>
<span class="t" style="top:727.00px;font-size:14px;color:#ffffff;left:454.80px;letter-spacing:-0.287px;-webkit-text-stroke:0.3px;">4.</span>
<span class="t" style="top:750.00px;font-size:14px;color:#ffffff;left:454.80px;letter-spacing:-0.287px;-webkit-text-stroke:0.3px;">5.</span>
<span class="t" style="top:772.00px;font-size:14px;color:#ffffff;left:454.80px;letter-spacing:-0.287px;clip-path:inset(0 0 3.8px 0);-webkit-text-stroke:0.3px;">6.</span>
<span class="t" style="top:660.00px;font-size:14px;color:#ffffff;left:470.70px;letter-spacing:0.214px;-webkit-text-stroke:0.3px;">Install the required packages</span>
<span class="t" style="top:682.00px;font-size:14px;color:#ffffff;left:470.70px;letter-spacing:0.255px;-webkit-text-stroke:0.3px;">The files are extracted from</span>
<div class="b" style="left:652.5px;top:680px;width:110.5px;height:18px;background:#3b3b3b;border-radius:1px;"></div>
<span class="t" style="top:683.00px;font-size:14px;color:#ffffff;font-family:'Liberation Mono', 'DejaVu Sans Mono', monospace;left:657.60px;letter-spacing:-0.021px;-webkit-text-stroke:0.3px;">user_uploads</span>
<span class="t" style="top:682.00px;font-size:14px;color:#ffffff;left:767.50px;letter-spacing:0.279px;-webkit-text-stroke:0.3px;">folder assuming their extensions represent the format - e.g.</span>
<div class="b" style="left:1155.2px;top:680px;width:102.5px;height:18px;background:#3b3b3b;border-radius:1px;"></div>
<span class="t" style="top:683.00px;font-size:14px;color:#ffffff;font-family:'Liberation Mono', 'DejaVu Sans Mono', monospace;left:1160.20px;letter-spacing:-0.002px;-webkit-text-stroke:0.3px;">SiO2.poscar</span>
<span class="t" style="top:682.00px;font-size:14px;color:#ffffff;left:1258.80px;-webkit-text-stroke:0.3px;">.</span>
<span class="t" style="top:705.00px;font-size:14px;color:#ffffff;left:470.70px;letter-spacing:0.260px;-webkit-text-stroke:0.3px;">Structural information is read from files into ASE Atoms objects.</span>
<span class="t" style="top:727.00px;font-size:14px;color:#ffffff;left:470.70px;letter-spacing:0.217px;-webkit-text-stroke:0.3px;">ASE Atoms objects are converted to</span>
<div class="b" style="left:706px;top:725px;width:60px;height:18px;background:#3b3b3b;border-radius:1px;"></div>
<span class="t" style="top:728.00px;font-size:14px;color:#ffffff;font-family:'Liberation Mono', 'DejaVu Sans Mono', monospace;left:711.00px;letter-spacing:-0.084px;-webkit-text-stroke:0.3px;">poscar</span>
<span class="t" style="top:727.00px;font-size:14px;color:#ffffff;left:770.70px;letter-spacing:0.422px;-webkit-text-stroke:0.3px;">format</span>
<div class="b" style="left:470px;top:748px;width:61px;height:18px;background:#3b3b3b;border-radius:1px;"></div>
<span class="t" style="top:751.00px;font-size:14px;color:#ffffff;font-family:'Liberation Mono', 'DejaVu Sans Mono', monospace;left:475.00px;letter-spacing:-0.084px;-webkit-text-stroke:0.3px;">poscar</span>
<span class="t" style="top:750.00px;font-size:14px;color:#ffffff;left:535.00px;letter-spacing:0.153px;-webkit-text-stroke:0.3px;">structures are converted to ESSE</span>
<span class="t" style="top:772.00px;font-size:14px;color:#ffffff;left:470.70px;letter-spacing:0.247px;clip-path:inset(0 0 3.8px 0);-webkit-text-stroke:0.3px;">The results are passed to the outside runtime</span>
<div class="b" style="left:1672px;top:217px;width:32px;height:571px;background:#424242;"></div>
<div class="b" style="left:1672px;top:217px;width:1px;height:571px;background:#555;"></div>
<svg class="b" style="left:1680px;top:235px;" width="17" height="17" viewBox="0 0 17 17"><g fill="#cfcfcf"><circle cx="4.6" cy="4.6" r="3.2"/><circle cx="11" cy="11" r="4.4"/></g><g stroke="#cfcfcf" stroke-width="1.6"><path d="M4.6 0.2 V9 M0.2 4.6 H9 M1.5 1.5 L7.7 7.7 M7.7 1.5 L1.5 7.7"/><path d="M11 5 V17 M5 11 H17 M6.8 6.8 L15.2 15.2 M15.2 6.8 L6.8 15.2" stroke-width="2"/></g><circle cx="4.6" cy="4.6" r="1.3" fill="#424242"/><circle cx="11" cy="11" r="2" fill="#424242"/></svg>
<div class="b" style="left:58px;top:787.6px;width:1646px;height:24.4px;background:#3e3e3e;"></div>
<span class="t" style="top:794.20px;font-size:13px;color:#e4e4e4;left:86.20px;letter-spacing:-0.150px;-webkit-text-stroke:0.3px;">Simple</span>
<div class="b" style="left:131.6px;top:792.4px;width:34px;height:15.4px;background:#585858;border-radius:8px;"></div>
<div class="b" style="left:133.2px;top:794.5px;width:11.6px;height:11.6px;background:#141414;border-radius:6px;"></div>
<span class="t" style="top:794.20px;font-size:13px;color:#e4e4e4;left:192.20px;-webkit-text-stroke:0.3px;">0</span>
<div class="b" style="left:211px;top:792.8px;width:16px;height:15.8px;background:#ececec;border-radius:1px;"></div>
<span class="t" style="top:796.55px;font-size:9.5px;color:#222;left:213.20px;-webkit-text-stroke:0.2px;">$_</span>
<span class="t" style="top:794.20px;font-size:13px;color:#e4e4e4;left:236.00px;-webkit-text-stroke:0.3px;">2</span>
<svg class="b" style="left:255px;top:793.4px;" width="14" height="14" viewBox="0 0 14 14"><rect x="2.7" y="2.7" width="8.6" height="8.6" rx="1.4" fill="none" stroke="#e6e6e6" stroke-width="1.7"/><rect x="5.3" y="5.3" width="3.4" height="3.4" fill="none" stroke="#e6e6e6" stroke-width="1.2"/><path d="M5 0.2 V2.6 M9 0.2 V2.6 M5 11.4 V13.8 M9 11.4 V13.8 M0.2 5 H2.6 M0.2 9 H2.6 M11.4 5 H13.8 M11.4 9 H13.8" stroke="#e6e6e6" stroke-width="1.4"/></svg>
<span class="t" style="top:794.20px;font-size:13px;color:#e4e4e4;left:287.60px;letter-spacing:0.273px;-webkit-text-stroke:0.3px;">Python (Pyodide) | Idle</span>
<span class="t" style="top:794.20px;font-size:13px;color:#e4e4e4;left:1246.00px;letter-spacing:0.357px;-webkit-text-stroke:0.3px;">Mode: Command</span>
<svg class="b" style="left:1369px;top:792.6px;" width="15" height="15" viewBox="0 0 15 15"><path d="M7.5 0.8 L13.6 2.8 V7 Q13.6 11.4 7.5 14.2 Q1.4 11.4 1.4 7 V2.8 Z" fill="none" stroke="#e0e0e0" stroke-width="1.2"/><path d="M5.2 4.8 L9.8 9.4 M9.8 4.8 L5.2 9.4" stroke="#e0e0e0" stroke-width="1.2"/></svg>
<span class="t" style="top:794.20px;font-size:13px;color:#e4e4e4;left:1402.00px;letter-spacing:-0.148px;-webkit-text-stroke:0.3px;">Ln 1, Col 1</span>
<span class="t" style="top:794.20px;font-size:13px;color:#e4e4e4;left:1479.00px;letter-spacing:0.395px;-webkit-text-stroke:0.3px;">import_materials_from_files.ipynb</span>
</div></body></html>
